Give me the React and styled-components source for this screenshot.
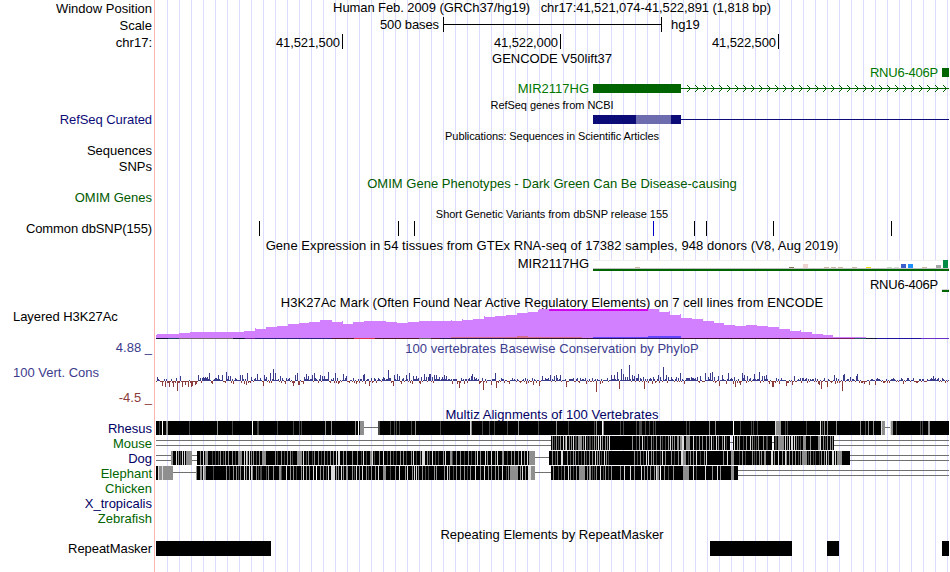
import React from 'react';
import styled, { createGlobalStyle } from 'styled-components';

const GlobalStyle = createGlobalStyle`
  body {
    margin: 0;
    background: #fff;
    font-family: "Liberation Sans", Arial, Helvetica, sans-serif;
    font-size: 13px;
    color: #000;
  }
`;

const Browser = styled.main`
  width: 949px;
  height: 572px;
  overflow: hidden;
  background:
    linear-gradient(#ffb4b4, #ffb4b4) 154px 0 / 1px 100% no-repeat,
    repeating-linear-gradient(to right, #dcdcff 0 1px, transparent 1px 12px) 167px 0 / 782px 100% no-repeat;
`;

const Row = styled.div`
  display: flex;
  height: ${(p) => p.$h}px;
`;

const Label = styled.div`
  box-sizing: border-box;
  flex: 0 0 155px;
  padding: 0 3px 0 13px;
  text-align: ${(p) => (p.$left ? 'left' : 'right')};
  line-height: ${(p) => p.$h}px;
  letter-spacing: ${(p) => p.$spacing || 0}px;
  color: ${(p) => p.$color || '#000'};
  white-space: nowrap;
`;

const Title = styled.div`
  flex: 1;
  text-align: center;
  white-space: pre;
  line-height: ${(p) => p.$line || p.$h}px;
  font-size: ${(p) => (p.$small ? 11 : 13)}px;
  letter-spacing: ${(p) => p.$spacing || 0}px;
  color: ${(p) => p.$color || '#000'};
`;

const Canvas = styled.svg`
  display: block;
  flex: 0 0 794px;
  overflow: visible;
  shape-rendering: crispEdges;
`;

const ItemName = styled.text`
  font-size: 13px;
  fill: ${(p) => p.$color || '#000'};
  text-anchor: ${(p) => p.$anchor || 'end'};
  letter-spacing: ${(p) => p.$spacing || 0}px;
`;

const Chevron = styled.path`
  fill: none;
  stroke: #006400;
  shape-rendering: geometricPrecision;
`;

const ScaleLabels = styled.div`
  box-sizing: border-box;
  display: flex;
  flex-direction: column;
  justify-content: space-between;
  flex: 0 0 155px;
  padding: 0 3px 1px 13px;
  line-height: 16px;
`;

const Limit = styled.div`
  text-align: right;
  color: ${(p) => p.$color};
`;

const TrackName = styled.div`
  color: #3c3c8c;
`;

const ConservationBody = styled.div`
  flex: 0 0 794px;
`;

const NAVY = '#0c0c78';
const GREEN = '#006400';
const BLUE = '#3c3c8c';
const RED = '#8c3c3c';

// [x, top] of every step of the histone signal
const H3K27 = [
  [156, 335], [157, 334], [179, 333], [190, 332], [244, 331], [255, 328], [256, 329], [266, 327],
  [277, 326], [288, 324], [299, 323], [309, 322], [320, 320], [332, 322], [342, 321], [343, 324],
  [353, 322], [364, 321], [386, 322], [397, 323], [408, 322], [419, 321], [451, 320], [452, 321],
  [462, 319], [463, 320], [473, 319], [484, 316], [485, 317], [495, 316], [506, 315], [517, 313],
  [528, 312], [538, 310], [539, 309], [659, 312], [669, 311], [670, 315], [680, 314], [681, 318],
  [692, 319], [703, 321], [714, 323], [724, 325], [735, 326], [746, 325], [757, 326], [768, 327],
  [779, 329], [790, 331], [800, 330], [801, 332], [812, 334], [823, 335], [833, 337], [866, 338],
];

const H3K27_BASE = [
  [156, 168, '#14143c'], [168, 179, '#1e4664'], [179, 233, '#78646e'], [233, 245, '#14143c'],
  [245, 255, '#6e2896'], [255, 332, '#321e82'], [332, 354, '#50142d'], [354, 375, '#dc3250'],
  [375, 419, '#50142d'], [419, 431, '#646464'], [431, 440, '#50142d'], [440, 506, '#281450'],
  [506, 593, '#321432'], [593, 681, '#28145a'], [681, 790, '#3c0a32'], [790, 812, '#821450'],
  [812, 855, '#781e64'], [855, 866, '#285a64'], [866, 877, '#14143c'], [877, 921, '#1e14a0'],
  [921, 949, '#6432c8'],
];

// x:height pairs, upward bars then downward bars
const CONS_UP = `157:4 180:5 198:6 200:3 202:3 203:4 204:3 205:4 206:3 207:4 209:8 218:6 222:6 226:9
  228:5 230:5 235:3 240:6 242:6 247:8 251:4 257:7 260:3 264:6 266:4 270:8 273:12 275:8 280:5 282:3
  289:3 295:6 297:8 304:4 306:7 308:5 312:6 314:8 320:6 322:5 324:5 328:9 335:8 343:7 346:5 353:3
  363:6 364:7 378:3 383:4 388:11 394:6 397:7 399:5 403:3 406:6 409:8 413:5 416:5 421:4 424:7 426:4
  428:4 429:7 430:7 432:4 434:6 436:6 439:4 442:4 444:6 446:5 469:3 471:5 472:7 474:4 495:8 501:3
  512:3 532:3 542:5 545:3 550:6 554:5 556:6 560:6 573:3 580:3 592:3 611:6 614:6 617:9 621:12 623:7
  625:4 627:4 629:16 632:6 634:5 636:3 638:7 643:4 650:3 653:4 658:6 660:4 663:14 666:6 668:4 671:4
  676:4 680:8 686:3 691:4 697:4 700:5 705:8 708:4 710:8 712:9 714:4 718:5 722:6 728:8 731:3 734:4
  742:8 744:6 747:5 750:3 754:7 759:9 762:5 764:5 766:6 776:3 794:5 800:3 806:3 815:3 824:3 834:6
  843:6 844:7 850:4 856:5 857:7 877:3 893:3 908:3 933:5 935:3 942:3`;

const CONS_DOWN = `162:5 165:6 169:6 173:6 177:10 182:6 185:4 188:6 191:6 192:5 195:4 196:3 212:3 225:2
  233:3 244:3 246:4 263:5 271:2 285:3 293:5 298:4 299:4 303:3 318:2 338:3 356:3 365:3 369:5 393:5
  401:3 410:2 412:3 416:4 420:3 452:3 457:3 459:7 464:3 479:3 483:9 491:4 496:7 509:3 526:3 533:4
  539:5 566:6 573:2 586:3 596:11 600:3 619:8 644:8 652:3 684:3 719:5 726:3 733:3 735:6 740:4 769:3
  772:6 773:6 779:3 786:5 792:4 818:3 819:4 821:8 827:6 831:2 835:3 842:10 864:3 869:4 875:4 884:2
  903:3`;

const parsePairs = (text) => new Map(text.trim().split(/\s+/).map((p) => p.split(':').map(Number)));

// Low scores fill the bases between the listed peaks
const buildConservation = () => {
  const up = parsePairs(CONS_UP);
  const down = parsePairs(CONS_DOWN);
  const bars = [];
  let seed = 17;
  for (let x = 156; x < 949; x += 1) {
    seed = (seed * 1103515245 + 12345) % 2147483648;
    const r = seed / 2147483648;
    const s = (r * 7) % 1;
    const bias = x < 198 ? 0.3 : 0.68;
    if (up.has(x)) bars.push([x, up.get(x), true]);
    else if (down.has(x)) bars.push([x, down.get(x), false]);
    else if (r < bias) bars.push([x, s > 0.85 ? 3 : s > 0.45 ? 2 : 1, true]);
    else bars.push([x, s > 0.75 ? 2 : 1, false]);
  }
  return bars;
};

const CONSERVATION = buildConservation();

const SHADES = { d: '#484848', m: '#8f8f8f', l: '#dcdcdc', w: '#ffffff' };

// Stripes are written as x + shade + optional width
const SPECIES = [
  {
    name: 'Rhesus', color: '#000064', top: 421,
    blocks: [[156, 364], [378, 885], [890, 949]],
    single: [[364, 378], [885, 890]],
    stripes: `159d 162w 166m2 189d 217m 232d 252w 257d2 277d 293d 299d 301d 325m 331m 355m 358w 360m4
      378d2 390d 394d 396d 399d 411d 415m 440d 470l 471m 482d 489d 494d 507d 518m 538d 556m 568d
      594d 596m 602w 603m 620d 623d 636d 639d3 645d 649d 653d 655d 686d 689d 709m 715m 733w 740d
      751d 753d 757d 775l 776m5 785d 787d 806d 820l 822d 824m 827m 836m 860m 865d 868m 873m 881l
      882m3 890l 891m2 896d 920d 922d 928m2`,
  },
  {
    name: 'Mouse', color: GREEN, top: 436,
    blocks: [[551, 730], [733, 772], [774, 834]],
    single: [[730, 733], [772, 774]],
    double: [[156, 551], [834, 949]],
    stripes: `552m 554d 556m 558d 560m 563l 565m 566l 569m 571m 573l 575d2 578m4 583m 585l 587d 589d2
      592d 594m 596m 598l 600l 602m 605m 607m 609l 632m 636d 639m 642l 644d 647d 651m 653d 656m
      660m 662d 665d 668m 670l 672m 674m 677m2 680m2 682l2 686m4 693l 696d 699m 702m 706m 709m
      711l 713d 716l 718m 722m 724l 726d 734l 737m 739m 743d 746m 750l 752m 754d 756d 758m 763m
      766d2 775d2 778m6 785l 787m 789l 791l2 794l 796m 798d 800d 803m3 810m 818m2 820l 823m 825d
      827m 830m 832m`,
  },
  {
    name: 'Dog', color: '#000064', top: 451,
    blocks: [[171, 192], [197, 535], [549, 850]],
    single: [[535, 549]],
    double: [[156, 171], [192, 197], [850, 949]],
    stripes: `171m2 176l 178m 180d 182l 184l 186m6 200m 203l 205m3 212d 215d 218d 220m 223d 225m 228m
      232m 235d 238m4 244l 246l 247m 249l 251m 253m 256d 259m 262m4 275m 277d 281m 284d 287m 290m
      292d 297m5 303l 306d 308m 312d 314m 318m 321d 324m 327d 330m 333m 336l 338l2 343m 346m 352m
      357m 361d 363l 366d 370m2 372l 374d 379m 383l 387d 390m 393d 396d 400m 403m 406d 411m 413l
      416d 420m 422l3 427m 429d 432l 435d 438d 443m 445l 450m2 452d 456m 460m 464d 468m 471d 475m
      477l 480m 485l 487m 491l 495m 497l 502m2 507d 511m 514m 518m 521l 524m 527l 529m2 531m4 552m
      555d 557m 561l2 567m 570d 573m 575m 578d 581d 584m 586d 589m 592m 595l 597m 599m 601d 604l
      606m 608d 634m 637d 640m 643d 646l 648l 651m 653m 656d 660d 662l 665m 671m 674d 678m 681l2
      683m3 688d 690m 693m 696l 700d 704m 706l 723m 727l 731m3 739d 742m 745d 752m 754d 756d 759m
      761m 764m2 771l2 774m 778l 782m 785l 786m 789m 792m 795m 798d 800m 802m5 808d 810m 813d
      815d 819d 821m 824m 826l 828m 832l2 835l 837m5`,
  },
  {
    name: 'Elephant', color: GREEN, top: 466,
    blocks: [[156, 173], [196, 535], [551, 738]],
    single: [[173, 196], [535, 551]],
    double: [[738, 949]],
    stripes: `158l 159m3 162l 163m10 196m 200m2 203l 204m2 213d 226m 229d 233m 236m 238d 240m 244l
      246m 249l 251l 252m 256m 258d 260d2 266d 268m 273m 279m2 281d 286l 290m 293m 296d 301m
      303l 306m 309m 313l 316w 320m 323m 326d 328l 331l4 336m 338m 341l 343m 346m2 352m 354d
      356l 359m 362l 366m 368d 371m 375m 378l 383m3 390d 395m 399l 405m 407l 412m 414l 416l 418m
      422m 425d 428d 434m 436m 444m 447l 449m 453d 456m 460m 464m 467d 470m 475l 480m 484l 488m
      491m 495m 498m 502l 506d 508m 510m8 520m 522l 525m 528l3 531m4 553m 558d 561d 564m 568l
      570m 573d 576m 579m6 587m 589m2 592d 594d 596m 600l 603d 605m 608d 611m 620m 624l 630l
      634m 641l 644m 647m 650m 654m 656l 657m2 660w 664m 668d 673m 683m6 693l 696d 705l 712m
      717l 720m 731m3`,
  },
  { name: 'Chicken', color: GREEN },
  { name: 'X_tropicalis', color: '#000064' },
  { name: 'Zebrafish', color: GREEN },
];

const GTEX_BARS = [
  [635, 1, '#cdb79e'], [789, 1, '#8b7355'], [803, 4, '#eed5d2'], [824, 1, '#cdb79e'],
  [831, 1, '#cdb79e'], [838, 1, '#cdb79e'], [852, 1, '#cdb79e'], [866, 1, '#eedd00'],
  [887, 1, '#c1ddc1'], [894, 1, '#d9d9d9'], [901, 4, '#3a5fcd'], [908, 4, '#1e90ff'],
  [922, 1, '#cdb79e'], [936, 3, '#a6a6a6'], [943, 8, '#008b45'],
];

const SNPS = [259, 398, 414, 653, 694, 706, 773, 891];

const Box = ({ x, y, to, h, fill }) => <rect x={x} y={y} width={to - x} height={h} fill={fill} />;

// x is in window pixels, y in page pixels, so tracks share one ruler
const Plot = ({ top, h, children }) => (
  <Canvas width="794" height={h} viewBox={`155 ${top} 794 ${h}`}>{children}</Canvas>
);

const TitleRow = ({ h, children, ...rest }) => (
  <Row $h={h}>
    <Label $h={h} />
    <Title $h={h} {...rest}>{children}</Title>
  </Row>
);

const TrackRow = ({ top, h, label, labelHeight, color, left, spacing, children }) => (
  <Row $h={h}>
    <Label $h={labelHeight || h} $color={color} $left={left} $spacing={spacing}>{label}</Label>
    <Plot top={top} h={h}>{children}</Plot>
  </Row>
);

const Signal = () => {
  const path = H3K27.map(([x, y], i) => {
    const next = H3K27[i + 1] ? H3K27[i + 1][0] : 949;
    return `L${x} ${y}L${next} ${y}`;
  }).join('');
  return (
    <>
      <path d={`M156 338${path}L949 338Z`} fill="#d280ff" />
      <Box x={549} to={648} y={309} h={2} fill="#d200f0" />
      <Box x={451} to={582} y={337} h={1} fill="#d26e8c" />
      <Box x={517} to={528} y={336} h={1} fill="#d26e8c" />
      <Box x={593} to={681} y={337} h={1} fill="#6446ff" />
      <Box x={648} to={681} y={336} h={1} fill="#6446ff" />
      {H3K27_BASE.map(([x, to, fill]) => (
        <Box key={x} x={x} to={to} y={338} h={1} fill={fill} />
      ))}
    </>
  );
};

const Alignment = ({ top, blocks = [], single = [], double = [], stripes = '' }) => (
  <>
    {single.map(([x, to]) => <Box key={x} x={x} to={to} y={top + 6} h={1} fill="#707070" />)}
    {double.map(([x, to]) => (
      <React.Fragment key={x}>
        <Box x={x} to={to} y={top + 4} h={1} fill="#707070" />
        <Box x={x} to={to} y={top + 9} h={1} fill="#707070" />
      </React.Fragment>
    ))}
    {blocks.map(([x, to]) => <Box key={x} x={x} to={to} y={top} h={14} fill="#000" />)}
    {[...stripes.matchAll(/(\d+)([dmlw])(\d*)/g)].map(([key, x, shade, width]) => (
      <rect key={key} x={x} y={top} width={width || 1} height="14" fill={SHADES[shade]} />
    ))}
  </>
);

const App = () => (
  <>
    <GlobalStyle />
    <Browser>
      <Row $h={17}>
        <Label $h={17}>Window Position</Label>
        <Title $h={15} $spacing={-0.085}>{'Human Feb. 2009 (GRCh37/hg19)   chr17:41,521,074-41,522,891 (1,818 bp)'}</Title>
      </Row>
      <TrackRow top={17} h={17} label="Scale">
        <ItemName x="439" y="29" $spacing={-0.1}>500 bases</ItemName>
        <Box x={443} to={444} y={17} h={15} />
        <Box x={443} to={662} y={24} h={1} />
        <Box x={661} to={662} y={17} h={15} />
        <ItemName x="671" y="29" $anchor="start" $spacing={-0.1}>hg19</ItemName>
      </TrackRow>
      <TrackRow top={34} h={17} label="chr17:">
        {[[342, '41,521,500'], [560, '41,522,000'], [778, '41,522,500']].map(([x, text]) => (
          <g key={x}>
            <ItemName x={x - 2} y="47" $spacing={-0.1}>{text}</ItemName>
            <Box x={x} to={x + 1} y={34} h={15} />
          </g>
        ))}
      </TrackRow>
      <TitleRow h={15}>GENCODE V50lift37</TitleRow>
      <TrackRow top={66} h={14}>
        <ItemName x="938" y="77" $color="#007800" $spacing={-0.22}>RNU6-406P</ItemName>
        <Box x={942} to={949} y={68} h={9} fill={GREEN} />
      </TrackRow>
      <TrackRow top={80} h={17}>
        <ItemName x="589" y="93" $color="#007800">MIR2117HG</ItemName>
        <Box x={593} to={681} y={84} h={9} fill={GREEN} />
        <Box x={681} to={949} y={88} h={1} fill={GREEN} />
        {Array.from({ length: 33 }, (_, i) => (
          <Chevron key={i} d={`M${687 + i * 8} 85l3.5 3.5l-3.5 3.5`} />
        ))}
      </TrackRow>
      <TitleRow h={15} $line={17} $small $spacing={-0.05}>RefSeq genes from NCBI</TitleRow>
      <TrackRow top={112} h={16} label="RefSeq Curated" color={NAVY} spacing={-0.07}>
        <Box x={593} to={681} y={115} h={9} fill={NAVY} />
        <Box x={636} to={671} y={115} h={9} fill="#6c6cae" />
        <Box x={681} to={949} y={119} h={1} fill={NAVY} />
      </TrackRow>
      <TitleRow h={16} $small $spacing={-0.085}>Publications: Sequences in Scientific Articles</TitleRow>
      <TrackRow top={144} h={15} labelHeight={13} label="Sequences" />
      <TrackRow top={159} h={16} label="SNPs" />
      <TitleRow h={16} $line={18} $color="#005a00" $spacing={0.02}>OMIM Gene Phenotypes - Dark Green Can Be Disease-causing</TitleRow>
      <TrackRow top={191} h={15} labelHeight={13} label="OMIM Genes" color="#005a00" />
      <TitleRow h={15} $line={17} $small $spacing={-0.02}>Short Genetic Variants from dbSNP release 155</TitleRow>
      <TrackRow top={221} h={16} label="Common dbSNP(155)" spacing={-0.11}>
        {SNPS.map((x) => (
          <Box key={x} x={x} to={x + 1} y={221} h={15} fill={x === 653 ? '#0000c8' : '#000'} />
        ))}
      </TrackRow>
      <TitleRow h={17} $spacing={0.06}>Gene Expression in 54 tissues from GTEx RNA-seq of 17382 samples, 948 donors (V8, Aug 2019)</TitleRow>
      <TrackRow top={254} h={41}>
        <ItemName x="589" y="268">MIR2117HG</ItemName>
        <Box x={593} to={949} y={260} h={9} fill="#fff" />
        <Box x={593} to={949} y={260} h={1} fill="#eee" />
        <Box x={593} to={949} y={268} h={1} fill="#c0c0c0" />
        {GTEX_BARS.map(([x, h, fill]) => (
          <Box key={x} x={x} to={Math.min(x + 5, 949)} y={268 - h} h={h} fill={fill} />
        ))}
        <Box x={593} to={949} y={269} h={2} fill={GREEN} />
        <ItemName x="938" y="289" $spacing={-0.22}>RNU6-406P</ItemName>
        <Box x={942} to={949} y={289} h={1} fill="#d0d0d0" />
        <Box x={942} to={949} y={290} h={2} fill={GREEN} />
      </TrackRow>
      <TitleRow h={15} $spacing={0.055}>H3K27Ac Mark (Often Found Near Active Regulatory Elements) on 7 cell lines from ENCODE</TitleRow>
      <TrackRow top={310} h={30} label="Layered H3K27Ac" labelHeight={14} left spacing={-0.05}>
        <Signal />
      </TrackRow>
      <Row $h={67}>
        <ScaleLabels>
          <Limit $color={BLUE}>4.88 _</Limit>
          <TrackName>100 Vert. Cons</TrackName>
          <Limit $color={RED}>-4.5 _</Limit>
        </ScaleLabels>
        <ConservationBody>
          <Title $h={18} $color={BLUE} $spacing={0.035}>100 vertebrates Basewise Conservation by PhyloP</Title>
          <Plot top={358} h={49}>
            {CONSERVATION.map(([x, h, up]) => (
              <Box key={x} x={x} to={x + 1} y={up ? 381 - h : 381} h={h} fill={up ? BLUE : RED} />
            ))}
          </Plot>
        </ConservationBody>
      </Row>
      <TitleRow h={14} $line={16} $color="#000064" $spacing={0.06}>Multiz Alignments of 100 Vertebrates</TitleRow>
      {SPECIES.map(({ name, color, ...species }, i) => (
        <TrackRow key={name} top={421 + i * 15} h={15} label={name} color={color}>
          {species.top && <Alignment {...species} />}
        </TrackRow>
      ))}
      <TitleRow h={15} $line={17} $spacing={0.02}>Repeating Elements by RepeatMasker</TitleRow>
      <TrackRow top={541} h={16} label="RepeatMasker" spacing={-0.05}>
        {[[156, 271], [710, 792], [827, 839], [942, 949]].map(([x, to]) => (
          <Box key={x} x={x} to={to} y={541} h={15} />
        ))}
      </TrackRow>
    </Browser>
  </>
);

export default App;
